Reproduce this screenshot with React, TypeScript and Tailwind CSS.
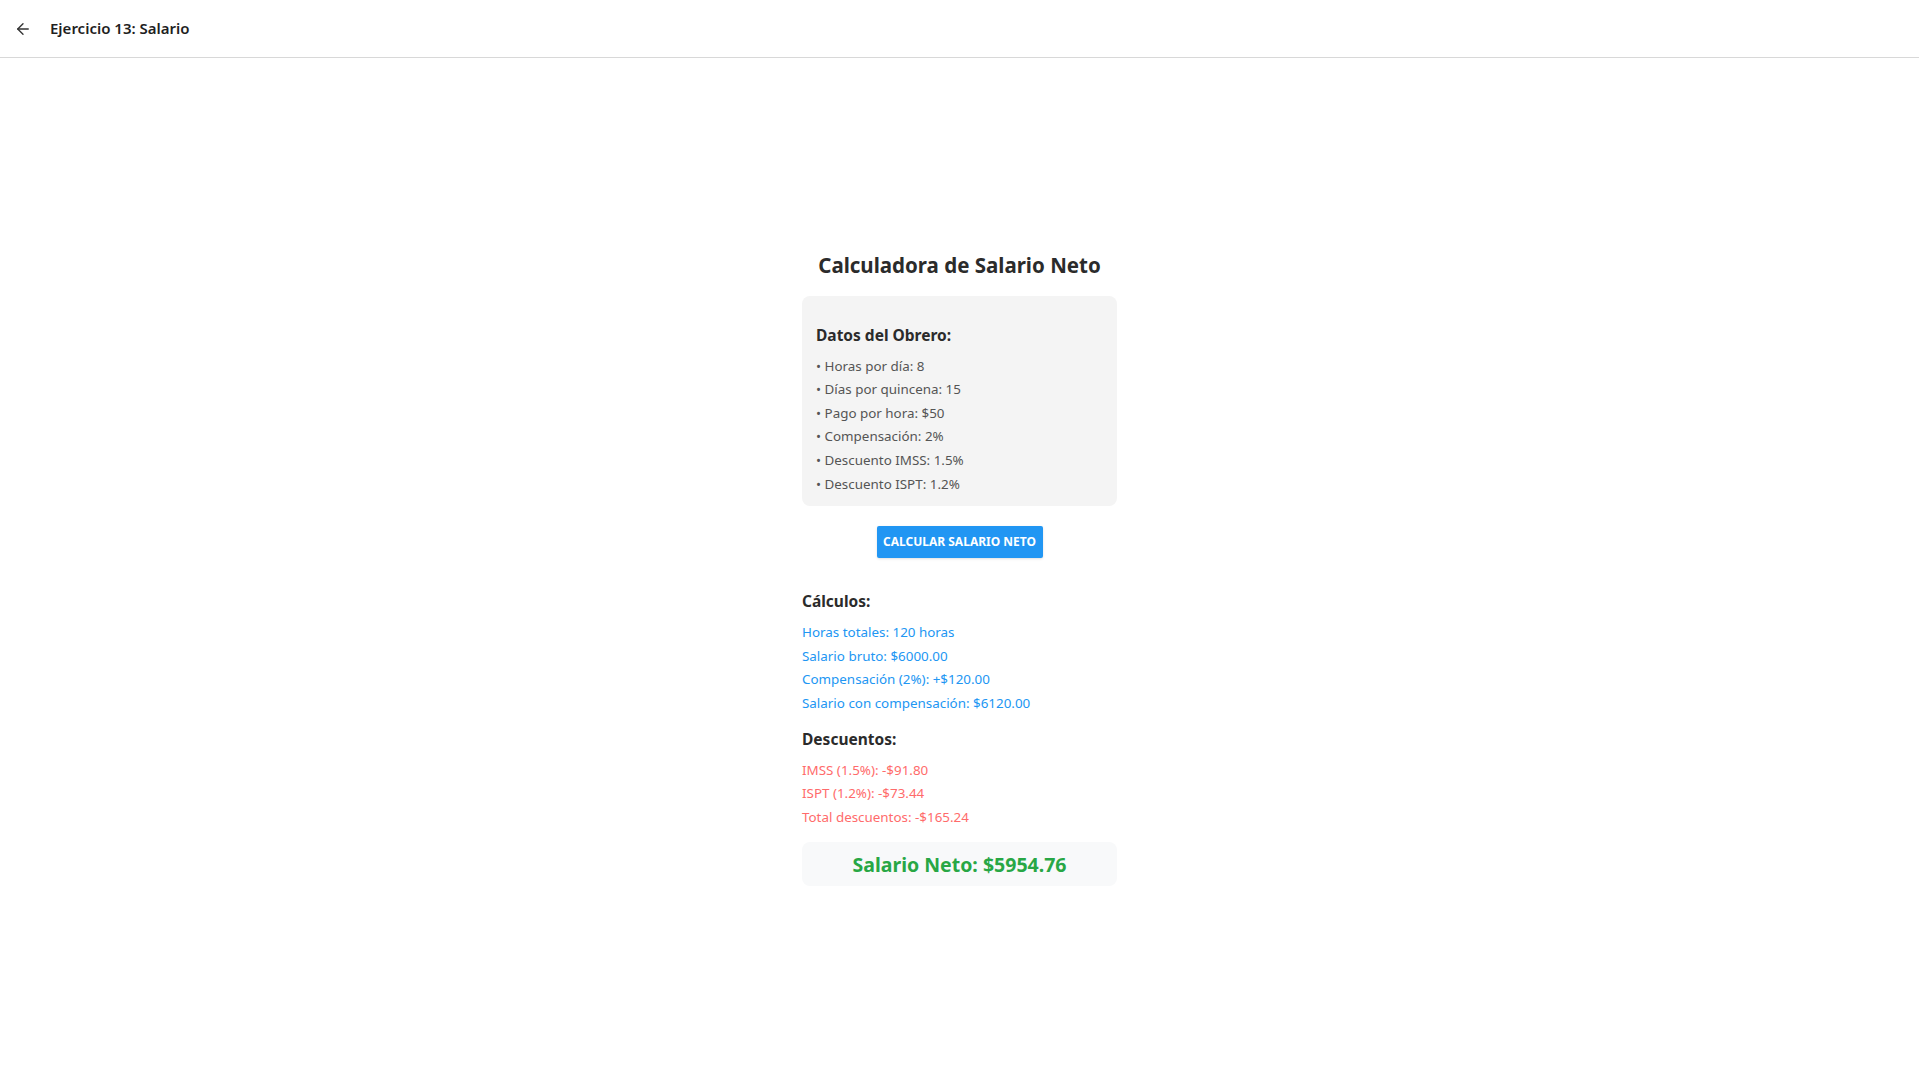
import { ArrowLeft } from 'lucide-react';

const datos = [
  'Horas por día: 8',
  'Días por quincena: 15',
  'Pago por hora: $50',
  'Compensación: 2%',
  'Descuento IMSS: 1.5%',
  'Descuento ISPT: 1.2%',
];

const calculos = [
  'Horas totales: 120 horas',
  'Salario bruto: $6000.00',
  'Compensación (2%): +$120.00',
  'Salario con compensación: $6120.00',
];

const descuentos = ['IMSS (1.5%): -$91.80', 'ISPT (1.2%): -$73.44', 'Total descuentos: -$165.24'];

export default function App() {
  return (
    <div className="min-h-screen flex flex-col bg-white font-['Noto_Sans',sans-serif] text-[#222]">
      {/* Header */}
      <header className="h-[58px] shrink-0 flex items-center border-b border-[#d8d8d8]">
        <button className="w-[46px] h-[46px] flex items-center justify-center text-[#333]">
          <ArrowLeft className="w-[18px] h-[18px]" strokeWidth={1.8} />
        </button>
        <h1 className="ml-[4px] text-[15px] font-semibold text-[#1f1f1f]">Ejercicio 13: Salario</h1>
      </header>

      {/* Content */}
      <main className="flex-1 flex items-center justify-center">
        <div className="w-[315px] flex flex-col">
          <h2 className="text-center text-[20.5px] font-bold leading-[28px] text-[#2b2b2b]">
            Calculadora de Salario Neto
          </h2>

          <div className="mt-[17px] bg-[#f4f4f4] rounded-[8px] px-[14px] pt-[25px] pb-[10px]">
            <h3 className="text-[15.5px] font-bold leading-[28px] text-[#2b2b2b]">Datos del Obrero:</h3>
            <ul className="mt-[6px] text-[13.4px] leading-[23.6px] text-[#555]">
              {datos.map((d) => (
                <li key={d}>• {d}</li>
              ))}
            </ul>
          </div>

          <button className="mt-[20px] self-center w-[166px] h-[32px] rounded-[2px] bg-[#2196f3] text-white text-[12px] font-bold uppercase shadow-sm">
            Calcular Salario Neto
          </button>

          <h3 className="mt-[29px] text-[15.5px] font-bold leading-[28px] text-[#2b2b2b]">Cálculos:</h3>
          <div className="mt-[6px] text-[13.4px] leading-[23.6px] text-[#2196f3]">
            {calculos.map((c) => (
              <p key={c}>{c}</p>
            ))}
          </div>

          <h3 className="mt-[9px] text-[15.5px] font-bold leading-[28px] text-[#2b2b2b]">Descuentos:</h3>
          <div className="mt-[6px] text-[13.4px] leading-[23.6px] text-[#ff6b6b]">
            {descuentos.map((d) => (
              <p key={d}>{d}</p>
            ))}
          </div>

          <div className="mt-[13px] h-[44px] flex items-center justify-center bg-[#f8f9fa] rounded-[8px]">
            <span className="text-[19.5px] font-bold text-[#28a745]">Salario Neto: $5954.76</span>
          </div>
        </div>
      </main>
    </div>
  );
}
